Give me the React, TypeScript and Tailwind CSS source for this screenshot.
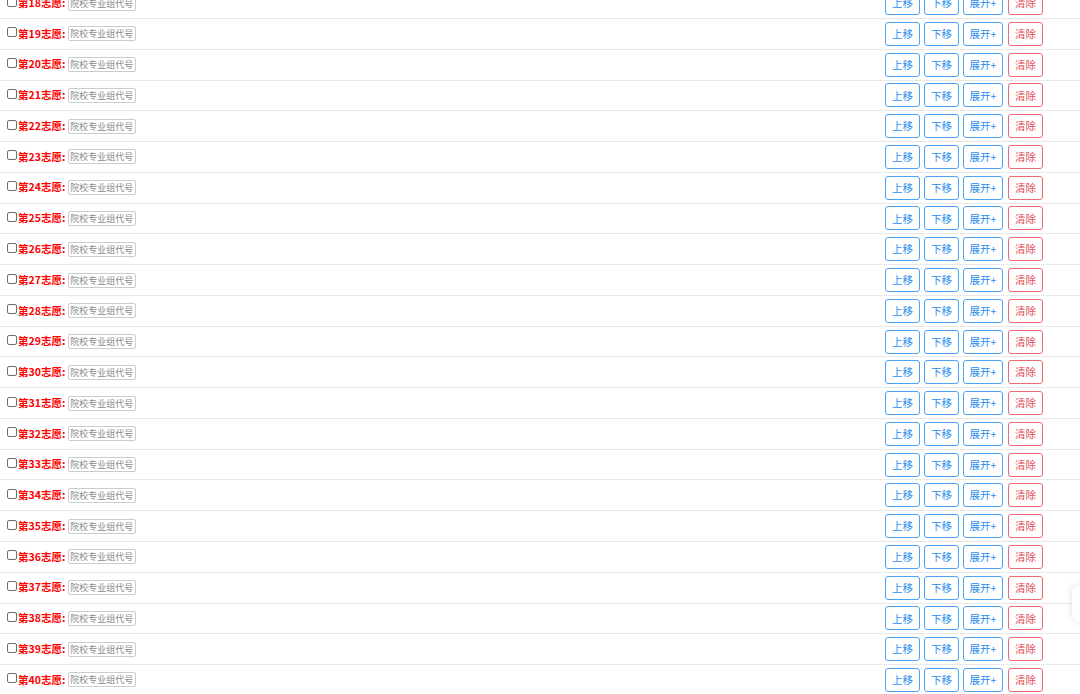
import { useState } from "react";

const rows = Array.from({ length: 23 }, (_, i) => i + 18);

function Row({ n }: { n: number }) {
  const [checked, setChecked] = useState(false);
  return (
    <div className="flex items-center justify-between h-[30.77px] border-b border-[#e8e8e8] pl-[7px] pr-[37px]">
      <div className="flex items-center">
        <input
          type="checkbox"
          checked={checked}
          onChange={() => setChecked(!checked)}
          className="appearance-none w-[10px] h-[10px] border border-[#6f6f6f] rounded-[2px] bg-white mt-[-3px]"
        />
        <span className="text-[10.5px] font-bold text-[#ff0000] ml-[1px] leading-none">
          第{n}志愿:
        </span>
        <input
          type="text"
          placeholder="院校专业组代号"
          className="ml-[3px] w-[68px] h-[15px] border border-[#c9ccd1] rounded-[2px] px-[1px] text-[9px] text-[#333] placeholder:text-[#8a8a8a] outline-none"
        />
      </div>
      <div className="flex items-center gap-[4px]">
        <button className="w-[35px] h-[24px] border border-[#4da3f7] rounded-[3px] bg-white text-[10.5px] text-[#2d8cf0]">
          上移
        </button>
        <button className="w-[35px] h-[24px] border border-[#4da3f7] rounded-[3px] bg-white text-[10.5px] text-[#2d8cf0]">
          下移
        </button>
        <button className="w-[40px] h-[24px] border border-[#4da3f7] rounded-[3px] bg-white text-[10.5px] text-[#2d8cf0]">
          展开+
        </button>
        <button className="w-[35px] h-[24px] border border-[#ec6b73] rounded-[3px] bg-white text-[10.5px] text-[#e34d59] ml-[1px]">
          清除
        </button>
      </div>
    </div>
  );
}

export default function App() {
  return (
    <div
      className="relative w-[1080px] h-[694px] overflow-hidden bg-white"
      style={{ fontFamily: '"Noto Sans CJK SC", "Liberation Sans", sans-serif' }}
    >
      <div className="mt-[-11.77px]">
        {rows.map((n) => (
          <Row key={n} n={n} />
        ))}
      </div>
      <div className="absolute right-[-30px] top-[585px] w-[38px] h-[36px] bg-white rounded-[8px] shadow-[0_0_8px_rgba(0,0,0,0.12)]" />
    </div>
  );
}
